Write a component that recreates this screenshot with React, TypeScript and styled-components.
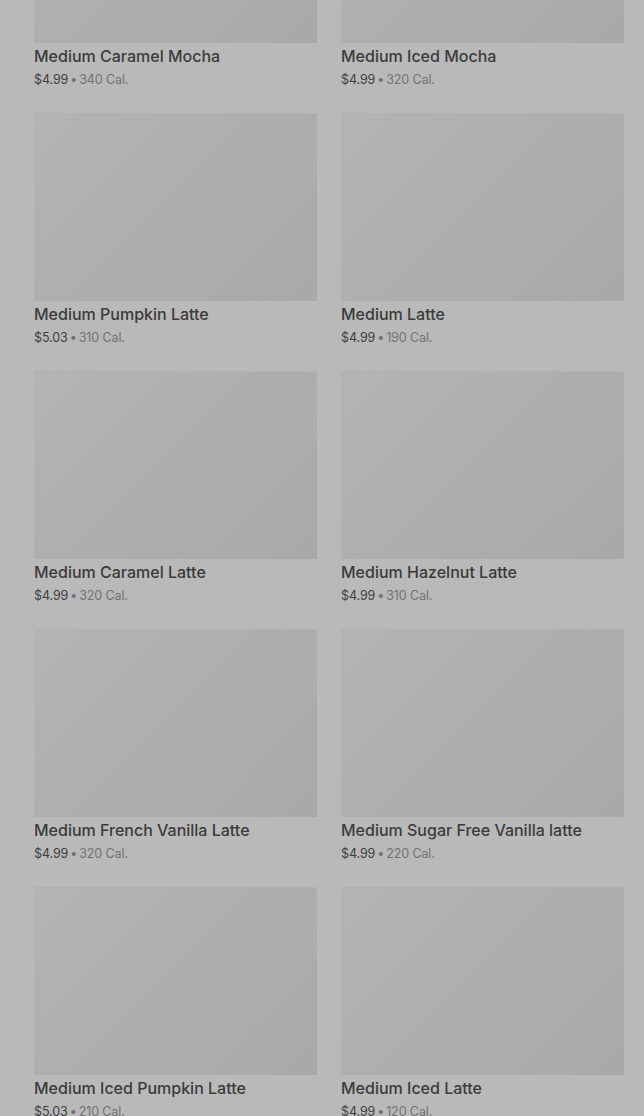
import React from "react";
import styled, { createGlobalStyle } from "styled-components";

const Global = createGlobalStyle`
  html, body { margin: 0; padding: 0; background: #b9b9b9; }
  body { font-family: Inter, "Open Sans", Roboto, sans-serif; overflow: hidden; }
`;

const Page = styled.div`
  width: 644px;
  height: 1116px;
  overflow: hidden;
  background: #b9b9b9;
`;

const Grid = styled.div`
  margin-top: -145px;
  padding: 0 20px 0 34px;
  display: grid;
  grid-template-columns: 283px 283px;
  column-gap: 24px;
  row-gap: 24px;
`;

const Card = styled.div`
  display: flex;
  flex-direction: column;
`;

const Thumb = styled.div`
  height: 188px;
  background: linear-gradient(135deg, #b4b4b4 0%, #adadad 55%, #a9a9a9 100%);
  border-top: 1px solid #b1b1b1;
  box-sizing: border-box;
`;

const Title = styled.div`
  margin-top: 3px;
  font-size: 16px;
  line-height: 20px;
  font-weight: 500;
  color: #3b3b3b;
`;

const Meta = styled.div`
  margin-top: 5px;
  font-size: 12.5px;
  line-height: 18px;
  color: #717171;
  letter-spacing: -0.1px;
`;

const Price = styled.span`
  color: #3e3e3e;
`;

const Dot = styled.span`
  margin: 0 2px;
`;

const items = [
  ["Medium Caramel Mocha", "$4.99", "340"],
  ["Medium Iced Mocha", "$4.99", "320"],
  ["Medium Pumpkin Latte", "$5.03", "310"],
  ["Medium Latte", "$4.99", "190"],
  ["Medium Caramel Latte", "$4.99", "320"],
  ["Medium Hazelnut Latte", "$4.99", "310"],
  ["Medium French Vanilla Latte", "$4.99", "320"],
  ["Medium Sugar Free Vanilla latte", "$4.99", "220"],
  ["Medium Iced Pumpkin Latte", "$5.03", "210"],
  ["Medium Iced Latte", "$4.99", "120"],
];

export default function App() {
  return (
    <Page>
      <Global />
      <Grid>
        {items.map(([name, price, cal]) => (
          <Card key={name}>
            <Thumb />
            <Title>{name}</Title>
            <Meta>
              <Price>{price}</Price>
              <Dot>•</Dot>
              {cal} Cal.
            </Meta>
          </Card>
        ))}
      </Grid>
    </Page>
  );
}
